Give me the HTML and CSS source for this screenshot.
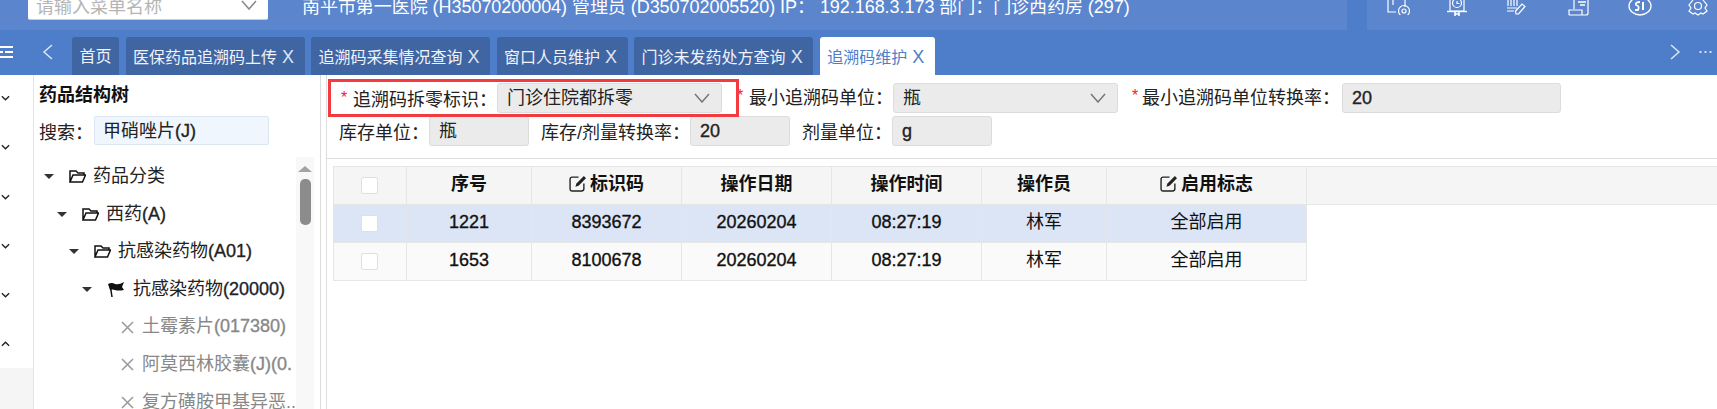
FILE: index.html
```html
<!doctype html>
<html lang="zh-CN">
<head>
  <meta charset="utf-8">
  <title>追溯码维护</title>
  <link rel="stylesheet" href="styles.css">
</head>
<body>
  <header class="topbar">
    <div class="menu-search">
      <span>请输入菜单名称</span>
      <svg class="caret" width="16" height="10" viewBox="0 0 16 10"><path d="M1 1 L8 9 L15 1" fill="none" stroke="#888" stroke-width="1.5"/></svg>
    </div>
    <div class="userinfo">南平市第一医院 (H35070200004) 管理员 (D350702005520) IP： 192.168.3.173 部门：门诊西药房 (297)</div>
    <div class="toolbox">
      <svg class="tool" width="24" height="15" viewBox="0 0 24 15" fill="none" stroke="#fff" stroke-width="1.2">
        <path d="M1 0 V12 H9"/><path d="M6 0 V5"/><path d="M18 0 V7"/><circle cx="17" cy="11" r="5.5"/><circle cx="17" cy="11" r="2"/>
      </svg>
      <svg class="tool" width="20" height="17" viewBox="0 0 20 17" fill="none" stroke="#fff" stroke-width="1.2">
        <path d="M3 0 V11 H17 V0"/><path d="M0 11.5 H20" stroke-width="1.4"/><circle cx="10" cy="3" r="4.5"/><path d="M10 1 V3.5 H12.5"/><path d="M8 12 V16 M12 12 V16 M8 14 H12" stroke-width="1.6"/>
      </svg>
      <svg class="tool" width="19" height="15" viewBox="0 0 19 15" fill="none" stroke="#fff" stroke-width="1.2">
        <path d="M1 0 V6 M4 0 V6 M7 0 V6 M10 0 V6"/><path d="M0 8 H10 M0 11 H7"/><path d="M9 14 L8.5 11 L15 4 L18 6.5 L11.500 14 Z"/>
      </svg>
      <svg class="tool" width="22" height="16" viewBox="0 0 22 16" fill="none" stroke="#fff" stroke-width="1.2">
        <path d="M6 0 V9"/><path d="M20 0 V13 Q20 15 18 15 H2 Q1 15 1 14 V10 H14 V15"/><path d="M10 2 H18 M12 5 H17" stroke-width="1.6"/>
      </svg>
      <svg class="tool" width="24" height="16" viewBox="0 0 24 16" fill="none" stroke="#fff" stroke-width="1.3">
        <ellipse cx="12" cy="6" rx="11" ry="9"/><path d="M12 2 Q7 2 8 5 Q12 6 10 10 H7" stroke-width="1.8"/><path d="M15 2 V10" stroke-width="2"/>
      </svg>
      <svg class="tool" width="20" height="16" viewBox="0 0 20 16" fill="none" stroke="#fff" stroke-width="1.2">
        <path d="M5 0 L1 5 L3 8 L1 11 L5 14 L7 13 L10 15 L13 13 L15 14 L19 11 L17 8 L19 5 L15 0"/><circle cx="10" cy="6" r="3.500"/>
      </svg>
    </div>
  </header>

  <nav class="tabbar">
    <svg class="menu-toggle" width="14" height="14" viewBox="0 0 14 14"><path d="M0 2 H13 M5 7 H13 M0 12 H13" stroke="#fff" stroke-width="2"/><path d="M0 7 H3" stroke="#fff" stroke-width="2"/></svg>
    <svg class="tab-prev" width="11" height="16" viewBox="0 0 11 16"><path d="M10 1 L2 8 L10 15" fill="none" stroke="#dde6f5" stroke-width="1.5"/></svg>
    <div class="tabs">
      <a class="tab">首页</a>
      <a class="tab closable">医保药品追溯码上传<i>X</i></a>
      <a class="tab closable">追溯码采集情况查询<i>X</i></a>
      <a class="tab closable">窗口人员维护<i>X</i></a>
      <a class="tab closable">门诊未发药处方查询<i>X</i></a>
      <a class="tab closable active">追溯码维护<i>X</i></a>
    </div>
    <svg class="tab-next" width="11" height="16" viewBox="0 0 11 16"><path d="M1 1 L9 8 L1 15" fill="none" stroke="#dde6f5" stroke-width="1.5"/></svg>
    <span class="tab-more"></span>
  </nav>

  <main class="main">
    <aside class="rail">
      <svg class="rail-arrow first" viewBox="0 0 10 6"><path d="M1 1 L5 5 L9 1" fill="none" stroke="#222" stroke-width="1.5"/></svg>
      <svg class="rail-arrow" viewBox="0 0 10 6"><path d="M1 1 L5 5 L9 1" fill="none" stroke="#222" stroke-width="1.5"/></svg>
      <svg class="rail-arrow" viewBox="0 0 10 6"><path d="M1 1 L5 5 L9 1" fill="none" stroke="#222" stroke-width="1.5"/></svg>
      <svg class="rail-arrow" viewBox="0 0 10 6"><path d="M1 1 L5 5 L9 1" fill="none" stroke="#222" stroke-width="1.5"/></svg>
      <svg class="rail-arrow" viewBox="0 0 10 6"><path d="M1 1 L5 5 L9 1" fill="none" stroke="#222" stroke-width="1.5"/></svg>
      <svg class="rail-arrow" viewBox="0 0 10 6"><path d="M1 5 L5 1 L9 5" fill="none" stroke="#222" stroke-width="1.5"/></svg>
      <div class="rail-rest"></div>
    </aside>

    <section class="tree-panel">
      <h3 class="tree-title">药品结构树</h3>
      <div class="tree-search">
        <label>搜索：</label>
        <div class="tree-input">甲硝唑片<span class="num">(J)</span></div>
      </div>
      <div class="tree-body">
        <ul class="tree">
          <li class="lv0"><b class="tri"></b><svg class="folder" viewBox="0 0 17 13"><path d="M1 12 V1 H7 L9 3 H15 V5 M1 12 L4 5 H16.500 L13.500 12 Z" fill="none" stroke="#111" stroke-width="1.500"/></svg>药品分类</li>
          <li class="lv1"><b class="tri"></b><svg class="folder" viewBox="0 0 17 13"><path d="M1 12 V1 H7 L9 3 H15 V5 M1 12 L4 5 H16.500 L13.500 12 Z" fill="none" stroke="#111" stroke-width="1.500"/></svg>西药<span class="num">(A)</span></li>
          <li class="lv2"><b class="tri"></b><svg class="folder" viewBox="0 0 17 13"><path d="M1 12 V1 H7 L9 3 H15 V5 M1 12 L4 5 H16.500 L13.500 12 Z" fill="none" stroke="#111" stroke-width="1.500"/></svg>抗感染药物<span class="num">(A01)</span></li>
          <li class="lv3"><b class="tri"></b><svg class="flag" viewBox="0 0 18 16"><path d="M1 2 Q5 0 8 2 Q12 3 17 0 L15 5 L17 8 Q11 9 8 8 Q5 7 3 8 Z" fill="#111"/><path d="M3 2 L5 15" stroke="#111" stroke-width="1.500"/></svg>抗感染药物<span class="num">(20000)</span></li>
          <li class="leaf"><svg class="cross" viewBox="0 0 13 13"><path d="M1 1 L12 12 M12 1 L1 12" stroke="#999" stroke-width="1.500"/></svg>土霉素片<span class="num">(017380)</span></li>
          <li class="leaf"><svg class="cross" viewBox="0 0 13 13"><path d="M1 1 L12 12 M12 1 L1 12" stroke="#999" stroke-width="1.500"/></svg>阿莫西林胶囊<span class="num">(J)(0.</span></li>
          <li class="leaf"><svg class="cross" viewBox="0 0 13 13"><path d="M1 1 L12 12 M12 1 L1 12" stroke="#999" stroke-width="1.500"/></svg>复方磺胺甲基异恶..</li>
        </ul>
        <div class="tree-scroll">
          <b class="scroll-up"></b>
          <b class="scroll-thumb"></b>
        </div>
      </div>
    </section>

    <section class="content">
      <form class="filters">
        <div class="filter-row">
          <div class="marked">
            <span class="star">*</span><label>追溯码拆零标识：</label>
            <div class="ctl select w225">门诊住院都拆零<svg width="16" height="10" viewBox="0 0 16 10"><path d="M1 1 L8 9 L15 1" fill="none" stroke="#777" stroke-width="1.500"/></svg></div>
          </div>
          <span class="star tight">*</span><label class="lb-unit">最小追溯码单位：</label>
          <div class="ctl select w225">瓶<svg width="16" height="10" viewBox="0 0 16 10"><path d="M1 1 L8 9 L15 1" fill="none" stroke="#777" stroke-width="1.500"/></svg></div>
          <span class="star gap13">*</span><label class="lb-rate">最小追溯码单位转换率：</label>
          <div class="ctl w219 num">20</div>
        </div>
        <div class="filter-row second">
          <label class="lb-stock">库存单位：</label>
          <div class="ctl w100">瓶</div>
          <label class="lb-ratio">库存/剂量转换率：</label>
          <div class="ctl w100 num">20</div>
          <label class="lb-dose">剂量单位：</label>
          <div class="ctl w100 num">g</div>
        </div>
      </form>

      <div class="grid-wrap">
        <table class="grid">
          <colgroup>
            <col class="c-check"><col class="c-125"><col class="c-150"><col class="c-150"><col class="c-150"><col class="c-125"><col class="c-200"><col>
          </colgroup>
          <thead>
            <tr>
              <th><span class="check"></span></th>
              <th>序号</th>
              <th><svg class="edit" viewBox="0 0 16 16"><path d="M14 8 V13 Q14 15 12 15 H3 Q1 15 1 13 V4 Q1 2 3 2 H9" fill="none" stroke="#222" stroke-width="1.300"/><path d="M6 11 L7 8 L14 1 L16 3 L9 10 Z" fill="#222"/></svg>标识码</th>
              <th>操作日期</th>
              <th>操作时间</th>
              <th>操作员</th>
              <th><svg class="edit" viewBox="0 0 16 16"><path d="M14 8 V13 Q14 15 12 15 H3 Q1 15 1 13 V4 Q1 2 3 2 H9" fill="none" stroke="#222" stroke-width="1.300"/><path d="M6 11 L7 8 L14 1 L16 3 L9 10 Z" fill="#222"/></svg>启用标志</th>
              <th class="filler-head"></th>
            </tr>
          </thead>
          <tbody>
            <tr class="selected">
              <td><span class="check"></span></td><td class="num">1221</td><td class="num">8393672</td><td class="num">20260204</td><td class="num">08:27:19</td><td>林军</td><td>全部启用</td><td class="filler"></td>
            </tr>
            <tr>
              <td><span class="check"></span></td><td class="num">1653</td><td class="num">8100678</td><td class="num">20260204</td><td class="num">08:27:19</td><td>林军</td><td>全部启用</td><td class="filler"></td>
            </tr>
          </tbody>
        </table>
      </div>
    </section>
  </main>
</body>
</html>
```

FILE: styles.css
```css
html,
body {
  margin: 0;
  padding: 0;
  background: #fff;
  overflow: hidden;
  height: 409px;
  font-family: "Liberation Sans", "Noto Sans CJK SC", sans-serif;
  font-size: 18px;
  color: #222;
}

/* latin and digits render heavier than the CJK in this app */
.num {
  -webkit-text-stroke: 0.35px currentColor;
}

/* top header, cut off by the screenshot */
.topbar {
  height: 30px;
  background: #5b85cd;
  display: flex;
  align-items: flex-end;
  overflow: hidden;
  position: relative;
}

.menu-search {
  flex: none;
  box-sizing: border-box;
  width: 240px;
  height: 40px;
  margin: 0 0 10px 28px;
  padding: 0 10px 0 8px;
  background: #fff;
  border-bottom: 1px solid #ccc;
  border-radius: 2px;
  color: #b5b5b5;
  display: flex;
  align-items: center;
  justify-content: space-between;
  line-height: 24px;
}

.menu-search span {
  transform: translateY(7px);
}

.menu-search .caret {
  transform: translateY(5px);
  margin-right: 1px;
}

.userinfo {
  flex: none;
  width: 1025px;
  margin-left: 34px;
  color: #fff;
  font-size: 18px;
  letter-spacing: -0.05px;
  line-height: 30px;
  height: 30px;
  white-space: nowrap;
  transform: translateY(-8px);
}

.toolbox {
  flex: 1;
  margin-left: 20px;
  height: 30px;
  border-left: 20px solid #4e7dca;
  display: grid;
  grid-template-columns: repeat(6, 60.2px);
  justify-items: start;
  align-items: start;
  padding-left: 20px;
}

/* tab strip */
.tabbar {
  height: 45px;
  background: #4e7eca;
  display: flex;
  align-items: flex-end;
  position: relative;
}

.menu-toggle {
  flex: none;
  margin-bottom: 16px;
}

.tab-prev {
  flex: none;
  margin: 0 0 15px 28px;
}

.tabs {
  display: flex;
  gap: 6.5px;
  margin-left: 19px;
  flex: 1;
}

.tab {
  height: 38px;
  box-sizing: border-box;
  padding: 0 7.5px;
  background: #4065a3;
  color: #f0f3fa;
  border-radius: 3px 3px 0 0;
  font-size: 16px;
  line-height: 40px;
  white-space: nowrap;
}

.tab.closable {
  padding-right: 10.5px;
}

.tab i {
  font-style: normal;
  font-size: 18px;
  margin-left: 5px;
  color: #dfe6f3;
}

.tab.active {
  background: #fff;
  color: #4e7eca;
}

.tab.active i {
  color: #4e7eca;
}

.tab-next {
  flex: none;
  margin: 0 17px 15px 0;
}

.tab-more {
  flex: none;
  width: 14px;
  height: 2px;
  margin: 0 5px 22px 0;
  background: radial-gradient(circle, #dde6f5 1px, transparent 1.2px) 0 0 / 5px 2px repeat-x;
}

/* main area */
.main {
  display: flex;
  height: 334px;
}

.rail {
  flex: none;
  width: 33px;
  border-right: 1px solid #e4e4e4;
  display: flex;
  flex-direction: column;
  align-items: flex-start;
}

.rail-arrow {
  flex: none;
  width: 9px;
  height: 6px;
  margin: 43.3px 0 0 1px;
}

.rail-arrow.first {
  margin-top: 20px;
}

.rail-rest {
  flex: 1;
  margin-top: 21px;
  align-self: stretch;
  background: #f5f5f5;
}

.tree-panel {
  flex: none;
  width: 286px;
  border-right: 1px solid #dcdcdc;
  display: flex;
  flex-direction: column;
  overflow: hidden;
}

.tree-title {
  margin: 8px 0 0 5px;
  font-size: 18px;
  line-height: 24px;
  font-weight: bold;
  color: #111;
}

.tree-search {
  display: flex;
  align-items: center;
  margin: 9px 0 0 5px;
  height: 29px;
}

.tree-search label {
  width: 55px;
}

.tree-input {
  box-sizing: border-box;
  width: 175px;
  height: 29px;
  line-height: 28px;
  padding-left: 8px;
  background: #eff6fd;
  border: 1px solid #dbe6f2;
  border-radius: 2px;
}

.tree-body {
  flex: 1;
  margin-top: 12px;
  display: flex;
  min-height: 0;
}

.tree {
  list-style: none;
  margin: 0;
  padding: 1px 0 0;
  width: 262px;
  flex: none;
}

.tree li {
  height: 37.6px;
  line-height: 37.6px;
  display: flex;
  align-items: center;
  white-space: nowrap;
  overflow: hidden;
}

.lv0 { padding-left: 10px; }
.lv1 { padding-left: 23px; }
.lv2 { padding-left: 35px; }
.lv3 { padding-left: 48px; }

.tree li.leaf {
  padding-left: 87px;
  color: #888;
}

.tri {
  flex: none;
  width: 0;
  height: 0;
  border: 5px solid transparent;
  border-top: 5px solid #333;
  border-bottom: 0;
  margin-right: 15px;
}

.folder {
  flex: none;
  width: 17px;
  height: 13px;
  margin-right: 7px;
}

.flag {
  flex: none;
  width: 18px;
  height: 16px;
  margin-right: 8px;
}

.cross {
  flex: none;
  width: 13px;
  height: 13px;
  margin-right: 8px;
}

.tree-scroll {
  flex: none;
  width: 18px;
  background: #f8f8f8;
  display: flex;
  flex-direction: column;
  align-items: center;
}

.scroll-up {
  width: 0;
  height: 0;
  border: 7px solid transparent;
  border-bottom: 6px solid #a3a3a3;
  border-top: 0;
  margin-top: 9px;
}

.scroll-thumb {
  width: 11px;
  height: 46px;
  margin-top: 7px;
  border-radius: 5px;
  background: #8c8c8c;
}

/* right side: filter form + grid */
.content {
  flex: 1;
  min-width: 0;
  margin-left: 5px;
  border-left: 1px solid #dcdcdc;
}

.filters {
  height: 83px;
  border-bottom: 1px solid #dedede;
}

.filter-row {
  display: flex;
  align-items: center;
  white-space: nowrap;
}

.filter-row label {
  flex: none;
}

.filter-row.second {
  margin-top: -1px;
  height: 30px;
  padding-left: 12px;
}

.marked {
  flex: none;
  box-sizing: border-box;
  width: 411px;
  height: 38px;
  margin: 4px 0 0 1px;
  padding: 0 13px 0 10px;
  border: 3px solid #f23a3f;
  display: flex;
  align-items: center;
  position: relative;
  z-index: 1;
}

.star {
  flex: none;
  width: 12px;
  color: #f2202a;
  font-size: 16px;
}

.star.tight {
  margin-left: -2px;
}

.star.gap13 {
  margin-left: 14px;
  width: 10px;
}

.marked label {
  width: 144px;
}

.lb-unit { width: 144px; }
.lb-rate { width: 200px; }
.lb-stock { width: 77px; margin-right: 13px; }
.lb-ratio { width: 149px; margin-left: 12px; }
.lb-dose { width: 90px; margin-left: 12px; }

.ctl {
  flex: none;
  box-sizing: border-box;
  height: 30px;
  line-height: 28px;
  padding-left: 9px;
  background: #ebebeb;
  border: 1px solid #dcdcdc;
  border-radius: 3px;
  color: #222;
  display: flex;
  align-items: center;
  justify-content: space-between;
}

.ctl svg {
  margin-right: 11px;
}

.w225 { width: 225px; }
.w219 { width: 219px; }
.w100 { width: 100px; }

.filter-row > .ctl {
  margin-top: 4px;
}

.filter-row.second > .ctl {
  margin-top: 0;
}

.grid-wrap {
  padding: 7px 0 0 6px;
}

.grid {
  width: 100%;
  table-layout: fixed;
  border-collapse: collapse;
  text-align: center;
}

.c-check { width: 73px; }
.c-125 { width: 125px; }
.c-150 { width: 150px; }
.c-200 { width: 200px; }

.grid th,
.grid td {
  height: 34px;
  padding: 0 0 3px;
  border: 1px solid #e6e6e6;
  font-size: 18px;
  line-height: 20px;
}

.grid th:first-child,
.grid td:first-child {
  padding: 0 2px 0 0;
  height: 37px;
}

.grid th {
  background: #f5f5f5;
  font-weight: bold;
  color: #111;
}

.grid td {
  background: #fafafa;
  color: #111;
}

.grid tr.selected td {
  background: #dce5f5;
}

.grid td.filler,
.grid tr.selected td.filler {
  background: #fff;
  border: 0;
}

.grid th.filler-head {
  border-right: 0;
}

.check {
  display: block;
  box-sizing: border-box;
  width: 17px;
  height: 17px;
  margin: 0 auto;
  background: #fff;
  border: 1px solid #e0e0e0;
  border-radius: 2px;
}

.edit {
  width: 17px;
  height: 17px;
  margin-right: 4px;
  vertical-align: -2px;
}
```
